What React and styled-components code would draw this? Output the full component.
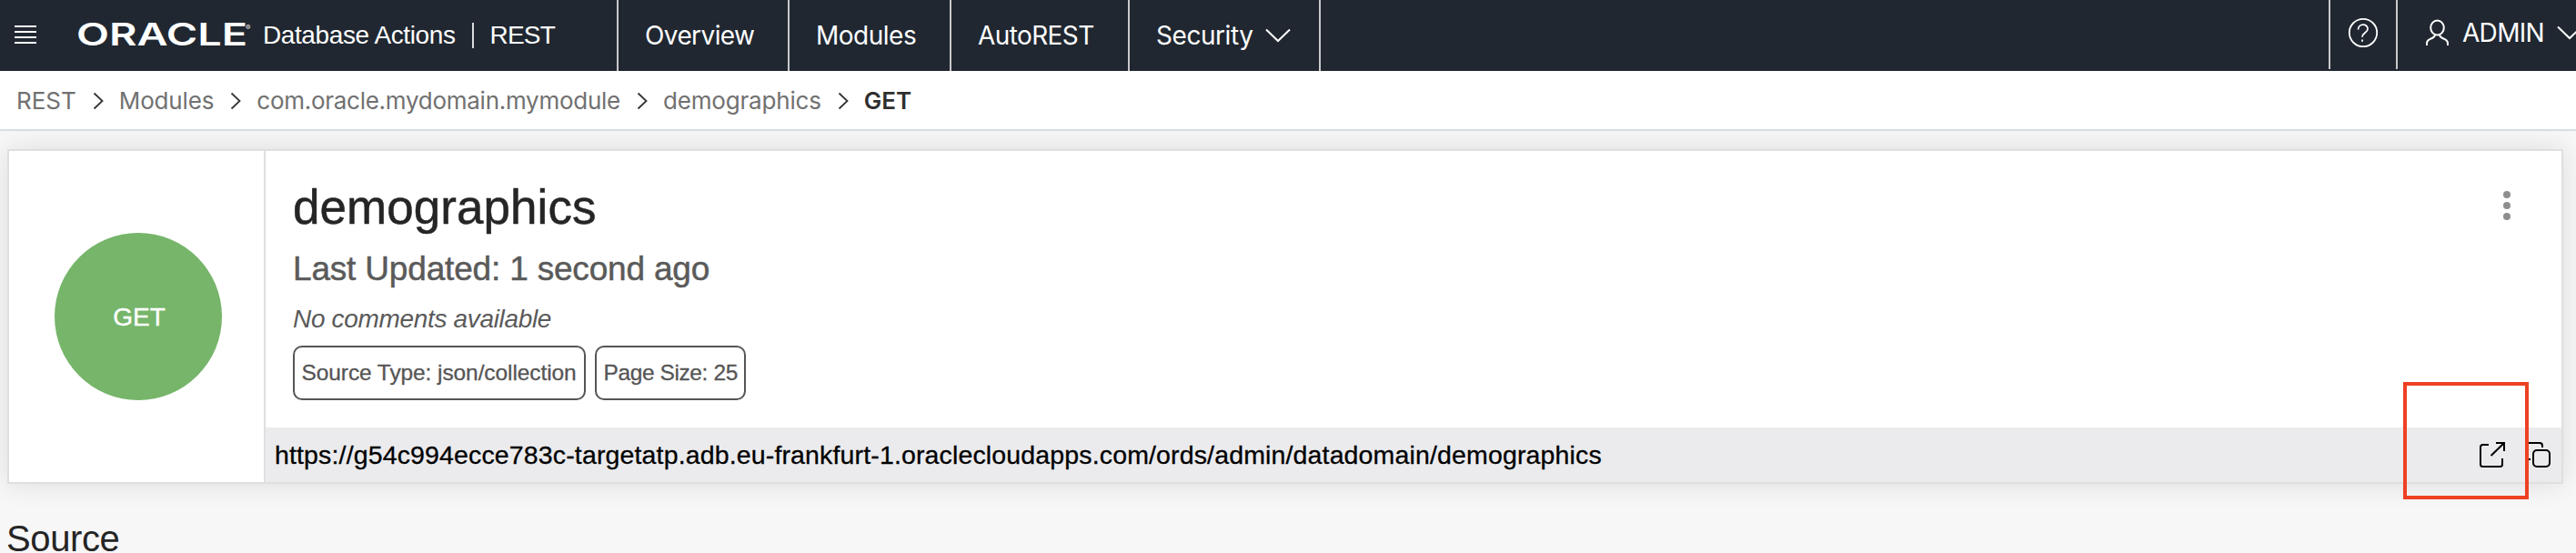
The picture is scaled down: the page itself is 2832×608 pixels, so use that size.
import React from "react";
import styled, { createGlobalStyle } from "styled-components";

const helvetica = `"Liberation Sans", Arial, sans-serif`;
const system = `Inter, "Liberation Sans", sans-serif`;

const GlobalStyle = createGlobalStyle`
  * { box-sizing: border-box; }
  body { margin: 0; background: #f7f7f7; overflow: hidden; font-family: ${helvetica}; }
`;

const Page = styled.div`
  display: flex;
  flex-direction: column;
  width: 2832px;
  height: 608px;
  overflow: hidden;
  background: #f7f7f7;
`;

const Text = styled.span`
  white-space: nowrap;
  letter-spacing: ${(p) => p.$track || 0}px;
  -webkit-text-stroke: ${(p) => p.$grade || 0}px currentColor;
`;

const Header = styled.header`
  display: flex;
  flex: none;
  height: 78px;
  color: #fff;
  background: #202731;
  line-height: 76px;
`;

const Brand = styled.div`
  display: flex;
  align-items: center;
  width: 678px;
  height: 76px;
  padding-left: 16px;
  font-size: 28px;
`;

const BrandText = styled(Text)`
  padding-top: 1px;
`;

const MenuIcon = styled.svg`
  flex: none;
  margin-right: 46px;
`;

const Logo = styled.svg`
  flex: none;
  margin-right: 11px;
  overflow: visible;
`;

const Separator = styled.span`
  width: 2px;
  height: 28px;
  margin: 2px 18px 0 18px;
  background: #d9dbdd;
`;

const NavItem = styled.a`
  display: flex;
  align-items: center;
  gap: 14px;
  width: ${(p) => p.$width}px;
  padding-left: 29px;
  border-left: 2px solid #c9c9c9;
  font: 400 28px/76px ${system};
`;

const NavEnd = styled.div`
  flex: 1;
  border-left: 2px solid #c9c9c9;
`;

const Tool = styled.div`
  display: flex;
  align-items: center;
  width: ${(p) => p.$width}px;
  height: 76px;
  padding: 0 0 4px ${(p) => p.$pad}px;
  border-left: 2px solid #c9c9c9;
  font: 400 28px/72px ${system};
  overflow: hidden;
  gap: 14px;
  svg { flex: none; }
`;

const Breadcrumbs = styled.nav`
  display: flex;
  flex: none;
  align-items: center;
  height: 66px;
  padding: 1px 0 0 18px;
  border-bottom: 2px solid #d9dee2;
  background: #fff;
  font: 400 26px/63px ${system};
`;

const Crumb = styled(Text)`
  color: ${(p) => (p.$current ? "#2f2f2f" : "#717171")};
  font-weight: ${(p) => (p.$current ? 600 : 400)};
`;

const CrumbArrow = styled.svg`
  flex: none;
  margin: 0 17px 0 18px;
`;

const Card = styled.section`
  display: flex;
  flex: none;
  width: 2810px;
  height: 368px;
  margin: 20px 0 0 8px;
  border: 2px solid #dfdfdf;
  background: #fff;
  box-shadow: 0 0 28px rgba(0, 0, 0, 0.11);
`;

const MethodPane = styled.div`
  display: flex;
  align-items: center;
  justify-content: center;
  width: 282px;
  border-right: 2px solid #dfdfdf;
`;

const MethodCircle = styled.div`
  width: 184px;
  height: 184px;
  margin-left: 4px;
  padding-left: 2px;
  border-radius: 50%;
  background: #76b56a;
  color: #fff;
  text-align: center;
  font-size: 28px;
  line-height: 185px;
`;

const Details = styled.div`
  display: flex;
  flex: 1;
  flex-direction: column;
`;

const Summary = styled.div`
  display: flex;
  justify-content: space-between;
  height: 304px;
  padding: 28px 56px 0 30px;
  color: #5a5a5a;
`;

const Title = styled.h1`
  margin: 0;
  color: #252525;
  font-size: 53px;
  font-weight: 400;
  line-height: 67px;
`;

const Updated = styled.div`
  margin-top: 3px;
  font-size: 37px;
  line-height: 64px;
`;

const Comments = styled.div`
  margin-top: 1px;
  font-size: 28px;
  font-style: italic;
  line-height: 44px;
`;

const Badges = styled.div`
  display: flex;
  gap: 10px;
  margin-top: 7px;
`;

const Badge = styled.span`
  width: ${(p) => p.$width}px;
  height: 60px;
  padding-left: 7.5px;
  border: 2px solid #555;
  border-radius: 10px;
  color: #555;
  font-size: 24.5px;
  line-height: 55px;
`;

const Kebab = styled.svg`
  margin-top: 16px;
`;

const UrlBar = styled.div`
  display: flex;
  align-items: center;
  height: 60px;
  padding: 0 10px;
  background: #ebebed;
  color: #000;
  font-size: 28.5px;
  line-height: 60px;
`;

const UrlActions = styled.div`
  display: flex;
  gap: 20px;
  margin-left: auto;
`;

const SourceTitle = styled.h2`
  margin: 34px 0 0 7px;
  color: #252525;
  font-size: 40px;
  font-weight: 400;
  line-height: 52px;
`;

const Highlight = styled.div`
  position: absolute;
  left: 2642px;
  top: 420px;
  width: 138px;
  height: 129px;
  border: 4px solid #ee4023;
`;

const Chevron = () => (
  <svg width="28" height="16" viewBox="0 0 28 16" fill="none" stroke="#fff" strokeWidth="2">
    <path d="M1 1.5 14 14 27 1.5" />
  </svg>
);

const crumbs = [
  ["REST", 0],
  ["Modules", -0.15],
  ["com.oracle.mydomain.mymodule", -0.27],
  ["demographics", -0.17],
  ["GET", 0],
];

export default function App() {
  return (
    <Page>
      <GlobalStyle />
      <Header>
        <Brand>
          <MenuIcon width="24" height="20" stroke="#fff" strokeWidth="2">
            <path d="M0 1h24M0 7h24M0 13h24M0 19h24" />
          </MenuIcon>
          <Logo width="192" height="26" fill="#fff" fontFamily="Inter, sans-serif">
            <text x="-2" y="25" fontSize="33.5" fontWeight="600" textLength="188" lengthAdjust="spacingAndGlyphs">ORACLE</text>
            <text x="184" y="8" fontSize="8">®</text>
          </Logo>
          <BrandText $track={-0.4}>Database Actions</BrandText>
          <Separator />
          <BrandText $track={-0.8}>REST</BrandText>
        </Brand>
        <NavItem $width={188}><Text $track={-0.6}>Overview</Text></NavItem>
        <NavItem $width={178}><Text $track={-0.5}>Modules</Text></NavItem>
        <NavItem $width={196}><Text $track={-0.6}>AutoREST</Text></NavItem>
        <NavItem $width={210}><Text $track={-0.45}>Security</Text><Chevron /></NavItem>
        <NavEnd />
        <Tool $width={74} $pad={19}>
          <svg width="34" height="34" viewBox="0 0 34 34" fill="none" stroke="#fff" strokeWidth="1.8">
            <circle cx="17" cy="17" r="15.2" />
            <path d="M11.500 13.500c0-7 10.500-7 10.500-.8 0 4.300-6 4.300-6 9" />
            <path d="M16 24.500v2.300" />
          </svg>
        </Tool>
        <Tool $width={198} $pad={30}>
          <svg width="27" height="30" viewBox="0 0 27 30" fill="none" stroke="#fff" strokeWidth="2">
            <ellipse cx="13.500" cy="9.500" rx="7.300" ry="7.900" />
            <path d="M2 29v-2.500c0-6 8.500-4 9-9.200M25 29v-2.500c0-6-8.500-4-9-9.200" />
          </svg>
          <Text $track={-0.7}>ADMIN</Text>
          <Chevron />
        </Tool>
      </Header>
      <Breadcrumbs>
        {crumbs.map(([label, track], i) => (
          <React.Fragment key={label}>
            {i > 0 && (
              <CrumbArrow width="12" height="20" viewBox="0 0 12 20" fill="none" stroke="#333" strokeWidth="1.800">
                <path d="m1.500 1.500 9 8.500-9 8.500" />
              </CrumbArrow>
            )}
            <Crumb $track={track} $current={i === crumbs.length - 1}>{label}</Crumb>
          </React.Fragment>
        ))}
      </Breadcrumbs>
      <Card>
        <MethodPane><MethodCircle><Text $grade={0.4}>GET</Text></MethodCircle></MethodPane>
        <Details>
          <Summary>
            <div>
              <Title><Text $track={0.05} $grade={0.5}>demographics</Text></Title>
              <Updated><Text $track={-0.18} $grade={0.5}>Last Updated: 1 second ago</Text></Updated>
              <Comments><Text $track={-0.33}>No comments available</Text></Comments>
              <Badges>
                <Badge $width={322}><Text $track={-0.09} $grade={0.3}>Source Type: json/collection</Text></Badge>
                <Badge $width={166}><Text $track={-0.4} $grade={0.3}>Page Size: 25</Text></Badge>
              </Badges>
            </div>
            <Kebab width="8" height="32" fill="#8e8e8e">
              <circle cx="4" cy="4" r="4" />
              <circle cx="4" cy="16" r="4" />
              <circle cx="4" cy="28" r="4" />
            </Kebab>
          </Summary>
          <UrlBar>
            <Text $track={0.145} $grade={0.3}>https://g54c994ecce783c-targetatp.adb.eu-frankfurt-1.oraclecloudapps.com/ords/admin/datadomain/demographics</Text>
            <UrlActions>
              <svg width="30" height="30" viewBox="0 0 30 30" fill="none" stroke="#000" strokeWidth="2">
                <path d="M10 4H3.500Q1 4 1 6.500V25.500Q1 28 3.500 28H22.500Q25 28 25 25.500V19M18 2H28M27 1V11M27 2 12.500 16" />
              </svg>
              <svg width="30" height="30" viewBox="0 0 30 30" fill="none" stroke="#000" strokeWidth="2">
                <rect x="9" y="10" width="18" height="18" rx="4" />
                <path d="M19 7V5Q19 2 16 2H3.500Q1 2 1 4.500V17.500Q1 20 3.500 20H6" />
              </svg>
            </UrlActions>
          </UrlBar>
        </Details>
      </Card>
      <SourceTitle><Text $track={-0.4}>Source</Text></SourceTitle>
      <Highlight />
    </Page>
  );
}
